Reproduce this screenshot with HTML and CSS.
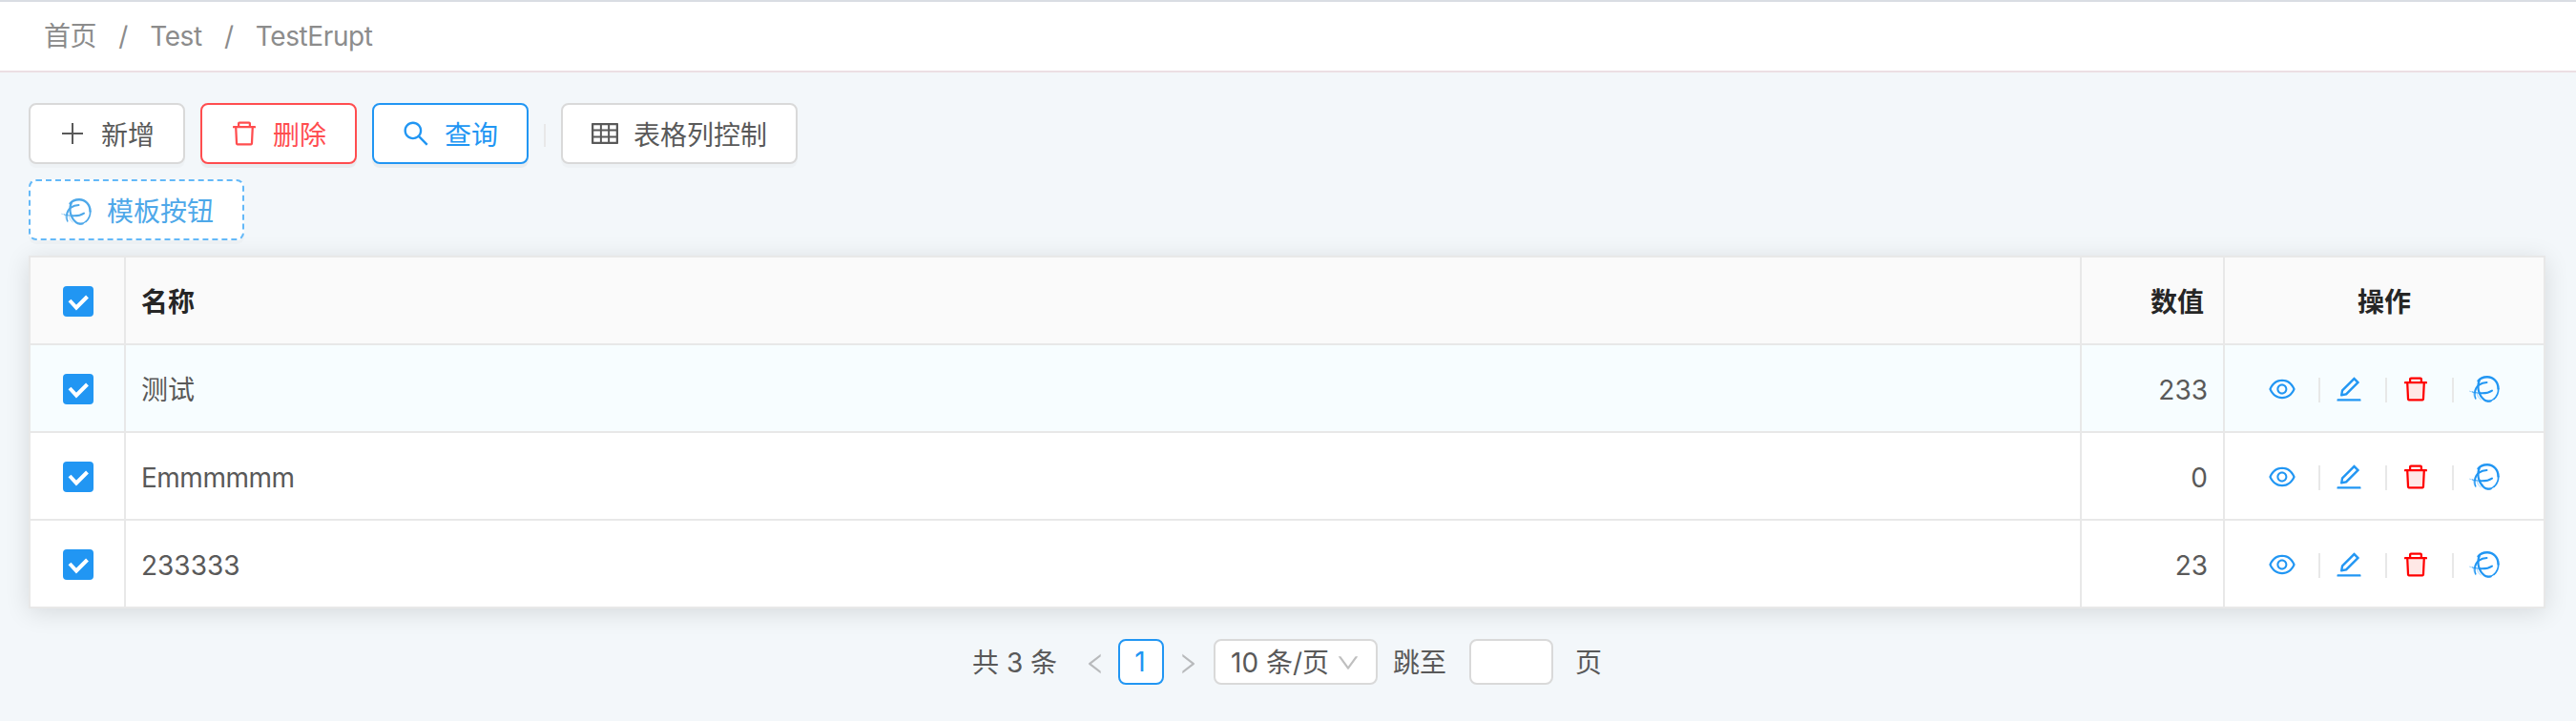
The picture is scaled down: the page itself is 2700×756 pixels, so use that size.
FILE: index.html
```html
<!DOCTYPE html>
<html lang="zh-CN">
<head>
<meta charset="utf-8">
<title>TestErupt</title>
<link rel="stylesheet" href="styles.css">
</head>
<body>
<svg class="sprite" aria-hidden="true">
  <symbol id="plus" viewBox="64 64 896 896"><path d="M480 160h64v704h-64z"/><path d="M160 480h704v64H160z"/></symbol>
  <symbol id="trash" viewBox="64 64 896 896"><path d="M360 184h-8c4.400 0 8-3.600 8-8v8h304v-8c0 4.400 3.600 8 8 8h-8v72h72v-80c0-35.300-28.700-64-64-64H352c-35.300 0-64 28.700-64 64v80h72v-72zm504 72H160c-17.700 0-32 14.300-32 32v32c0 4.400 3.600 8 8 8h60.400l24.700 523c1.600 34.100 29.800 61 63.900 61h454c34.200 0 62.300-26.800 63.900-61l24.700-523H888c4.400 0 8-3.600 8-8v-32c0-17.700-14.300-32-32-32zM731.300 840H292.700l-24.200-512h487l-24.200 512z"/></symbol>
  <symbol id="search" viewBox="64 64 896 896"><path d="M909.600 854.500L649.900 594.800C690.200 542.700 712 479 712 412c0-80.200-31.300-155.400-87.900-212.100-56.600-56.700-132-87.900-212.100-87.900s-155.500 31.300-212.100 87.900C143.200 256.500 112 331.800 112 412c0 80.100 31.300 155.500 87.900 212.100C256.500 680.800 331.800 712 412 712c67 0 130.600-21.800 182.700-62l259.700 259.600a8.200 8.200 0 0011.600 0l43.600-43.500a8.200 8.200 0 000-11.600zM570.400 570.400C528 612.700 471.800 636 412 636s-116-23.300-158.400-65.600C211.300 528 188 471.800 188 412s23.300-116.100 65.600-158.400C296 211.300 352.200 188 412 188s116.100 23.200 158.400 65.600S636 352.200 636 412s-23.300 116.100-65.600 158.400z"/></symbol>
  <symbol id="grid" viewBox="64 64 896 896"><path d="M928 160H96c-17.700 0-32 14.300-32 32v640c0 17.700 14.300 32 32 32h832c17.700 0 32-14.300 32-32V192c0-17.700-14.300-32-32-32zm-40 208H676V232h212v136zm0 224H676V432h212v160zM412 432h200v160H412V432zm200-64H412V232h200v136zm-476 64h212v160H136V432zm0-200h212v136H136V232zm0 424h212v136H136V656zm276 0h200v136H412V656zm476 136H676V656h212v136z"/></symbol>
  <symbol id="eye" viewBox="64 64 896 896"><path d="M942.200 486.200C847.400 286.500 704.100 186 512 186c-192.200 0-335.400 100.500-430.200 300.300a60.300 60.300 0 000 51.500C176.600 737.500 319.900 838 512 838c192.200 0 335.400-100.500 430.200-300.300 7.700-16.200 7.700-35 0-51.500zM512 766c-161.300 0-279.400-81.800-362.700-254C232.600 339.800 350.700 258 512 258c161.300 0 279.400 81.800 362.700 254C791.500 684.200 673.400 766 512 766zm-4-430c-97.200 0-176 78.800-176 176s78.800 176 176 176 176-78.800 176-176-78.800-176-176-176zm0 288c-61.900 0-112-50.100-112-112s50.100-112 112-112 112 50.100 112 112-50.100 112-112 112z"/></symbol>
  <symbol id="edit" viewBox="64 64 896 896"><path d="M257.700 752c2 0 4-.2 6-.5L431.900 722c2-.4 3.900-1.300 5.300-2.800l423.900-423.900a9.960 9.960 0 000-14.100L694.900 114.900c-1.900-1.900-4.400-2.900-7.100-2.900s-5.200 1-7.100 2.900L256.800 538.800c-1.500 1.500-2.400 3.300-2.800 5.300l-29.500 168.200a33.500 33.500 0 009.400 29.800c6.600 6.400 14.900 9.900 23.800 9.900zm67.400-174.400L687.800 215l73.300 73.300-362.700 362.600-88.900 15.700 15.600-89zM880 836H144c-17.700 0-32 14.300-32 32v36c0 4.400 3.600 8 8 8h784c4.400 0 8-3.600 8-8v-36c0-17.700-14.300-32-32-32z"/></symbol>
  <symbol id="left" viewBox="64 64 896 896"><path d="M724 218.300V141c0-6.700-7.700-10.400-12.900-6.300L260.300 486.800a31.860 31.860 0 000 50.300l450.800 352.100c5.300 4.100 12.900.4 12.900-6.300v-77.300c0-4.900-2.300-9.600-6.100-12.600l-360-281 360-281.100c3.800-3 6.100-7.700 6.100-12.600z"/></symbol>
  <symbol id="down" viewBox="64 64 896 896"><path d="M884 256h-75c-5.100 0-9.900 2.500-12.900 6.600L512 654.200 227.900 262.600c-3-4.100-7.800-6.600-12.900-6.600h-75c-6.500 0-10.300 7.400-6.500 12.700l352.600 486.100c12.800 17.600 39 17.600 51.700 0l352.600-486.100c3.900-5.300.1-12.700-6.400-12.700z"/></symbol>
  <symbol id="erupt" viewBox="0 0 32 28"><g fill="none" stroke="currentColor" stroke-linecap="round">
    <path stroke-width="2.400" d="M9.500 5.500C11.500 2.600 15 1.300 19 1.300c6.500 0 11.500 5.200 11.500 12.200"/>
    <path stroke-width="1.700" d="M30.700 13.500c0 4.500-1.700 8.300-4.700 10.800"/>
    <path stroke-width="1.200" d="M26 24.300c-1.800 1.700-4 2.500-6.500 2.600"/>
    <path stroke-width="2.200" d="M10.800 4.500C7.800 12 10 21 16 25.300c1.800 1.300 4 1.600 6.500 1.200"/>
    <path stroke-width="2" d="M18.500 6.900C12.500 7 6.800 10.500 6 17.500"/>
    <path stroke-width="1.500" d="M6 17.500c-.3 2.500-.1 4.500.8 6.300"/>
    <path stroke-width="2" d="M24 15.600c-3.300 2.200-8.300 3-13 2.600"/>
    <path stroke-width="1" d="M11 18.200C8 18 5.500 17.600 3.500 17"/>
    <path stroke-width=".8" opacity=".5" d="M3.500 17l-3-.8M4.500 18c.2 2.500 1 4.800 2.300 6.800M8.200 19c.7 2.500 2 4.500 4 6"/></g></symbol>
</svg>

<nav class="breadcrumb"><span>首页</span><i>/</i><span>Test</span><i>/</i><span>TestErupt</span></nav>

<main class="page">
  <div class="toolbar">
    <button class="btn"><svg class="icon"><use href="#plus"/></svg><span>新增</span></button>
    <button class="btn btn-danger"><svg class="icon"><use href="#trash"/></svg><span>删除</span></button>
    <button class="btn btn-primary"><svg class="icon"><use href="#search"/></svg><span>查询</span></button>
    <span class="bar"></span>
    <button class="btn btn-columns"><svg class="icon"><use href="#grid"/></svg><span>表格列控制</span></button>
  </div>
  <div class="toolbar">
    <button class="btn btn-dashed"><svg class="icon icon-erupt"><use href="#erupt"/></svg><span>模板按钮</span></button>
  </div>

  <section class="table">
    <div class="row head">
      <div class="cell check"><span class="box"><svg viewBox="0 0 32 32"><path d="M7 15l7 7.500L25.500 11"/></svg></span></div>
      <div class="cell name">名称</div><div class="cell number">数值</div><div class="cell title">操作</div>
    </div>
    <div class="row active">
      <div class="cell check"><span class="box"><svg viewBox="0 0 32 32"><path d="M7 15l7 7.500L25.500 11"/></svg></span></div>
      <div class="cell name">测试</div><div class="cell number">233</div>
      <div class="cell actions"><svg class="icon"><use href="#eye"/></svg><i></i><svg class="icon"><use href="#edit"/></svg><i></i><svg class="icon red"><path class="tint" d="M6.400 8.250h15.200l-.75 16H7.150z"/><use href="#trash"/></svg><i></i><svg class="icon icon-erupt"><use href="#erupt"/></svg></div>
    </div>
    <div class="row">
      <div class="cell check"><span class="box"><svg viewBox="0 0 32 32"><path d="M7 15l7 7.500L25.500 11"/></svg></span></div>
      <div class="cell name"><span class="latin">Emmmmmm</span></div><div class="cell number">0</div>
      <div class="cell actions"><svg class="icon"><use href="#eye"/></svg><i></i><svg class="icon"><use href="#edit"/></svg><i></i><svg class="icon red"><path class="tint" d="M6.400 8.250h15.200l-.75 16H7.150z"/><use href="#trash"/></svg><i></i><svg class="icon icon-erupt"><use href="#erupt"/></svg></div>
    </div>
    <div class="row">
      <div class="cell check"><span class="box"><svg viewBox="0 0 32 32"><path d="M7 15l7 7.500L25.500 11"/></svg></span></div>
      <div class="cell name">233333</div><div class="cell number">23</div>
      <div class="cell actions"><svg class="icon"><use href="#eye"/></svg><i></i><svg class="icon"><use href="#edit"/></svg><i></i><svg class="icon red"><path class="tint" d="M6.400 8.250h15.200l-.75 16H7.150z"/><use href="#trash"/></svg><i></i><svg class="icon icon-erupt"><use href="#erupt"/></svg></div>
    </div>
  </section>

  <div class="pager">
    <span class="total">共 3 条</span>
    <svg class="arrow"><use href="#left"/></svg>
    <span class="current">1</span>
    <svg class="arrow next"><use href="#left"/></svg>
    <span class="size">10 条/页<svg class="caret"><use href="#down"/></svg></span>
    <span class="jump">跳至</span>
    <input class="goto" type="text" aria-label="页码">
    <span class="unit">页</span>
  </div>
</main>
</body>
</html>
```
FILE: styles.css
```css
* { box-sizing: border-box; }
body {
  margin: 0;
  height: 756px;
  overflow: hidden;
  background: #f3f7fa;
  color: #595959;
  font: 28px/44px Inter, "Noto Sans CJK SC", sans-serif;
}
.sprite { display: none; }
svg { fill: currentColor; flex: none; }
i { font-style: normal; }

.breadcrumb {
  display: flex;
  height: 76px;
  padding: 14px 46px 0;
  background: #fff;
  border-top: 2px solid #d9dde3;
  border-bottom: 2px solid #ecdfe3;
  color: #8c8c8c;
  letter-spacing: -.4px;
}
.breadcrumb i { width: 56px; text-align: center; }

.page { padding: 32px 32px 0 30px; }
.toolbar { display: flex; align-items: center; gap: 16px; margin-bottom: 16px; }
.btn {
  display: flex;
  align-items: center;
  justify-content: center;
  gap: 16px;
  width: 164px;
  height: 64px;
  padding: 0;
  background: #fff;
  border: 2px solid #d9d9d9;
  border-radius: 8px;
  box-shadow: 0 4px 0 rgba(0, 0, 0, .02);
  color: #595959;
  font: inherit;
  white-space: nowrap;
}
.btn span { padding-top: 4px; }
.btn-danger { color: #ff4d4f; border-color: #ff4d4f; box-shadow: 0 4px 0 rgba(0, 0, 0, .045); }
.btn-primary { color: #2196f3; border-color: #2196f3; box-shadow: 0 4px 0 rgba(0, 0, 0, .045); }
.btn-columns { width: 248px; }
.btn-dashed { width: 226px; padding-left: 2px; color: #4ea8e9; border: 2px dashed #64b9f8; }
.btn-dashed .icon { margin-top: 4px; }
.bar { width: 2px; height: 24px; margin-top: 4px; background: #e8e8e8; }
.icon { width: 28px; height: 28px; }
.icon-erupt { width: 32px; }

.table {
  background: #fff;
  border: 2px solid #e8e8e8;
  border-bottom: 0;
  box-shadow: 0 4px 24px rgba(0, 0, 0, .12);
}
.row { display: grid; grid-template-columns: 100px 1fr 150px 334px; height: 92px; border-bottom: 2px solid #e8e8e8; }
.cell { display: flex; align-items: center; padding-top: 3px; border-right: 2px solid #e8e8e8; }
.cell:last-child { border-right: 0; }
.check { justify-content: center; padding-top: 2px; }
.name { padding-left: 16px; }
.latin { letter-spacing: -.5px; }
.number { justify-content: flex-end; padding-right: 16px; }
.head { background: #fafafa; color: #262626; font-weight: 700; }
.head .number { padding-right: 20px; }
.active { background: #f7fdff; }
.title { justify-content: center; }
.box { display: flex; width: 32px; height: 32px; margin-left: 2px; background: #2196f3; border-radius: 4px; }
.box path { fill: none; stroke: #fff; stroke-width: 4; }
.actions { padding: 2px 0 0 46px; color: #2196f3; }
.actions i { width: 2px; height: 26px; margin: 2px 16px 0 24px; background: #e8e8e8; }
.red { color: #f00; }
.tint { fill: #ffe8e6; }

.pager { display: flex; align-items: center; height: 48px; margin: 32px 0 0 989px; }
.total { width: 117px; padding-top: 1px; }
.arrow { width: 24px; height: 24px; margin: 4px 12px 0 0; color: #b8babc; }
.current {
  width: 48px;
  height: 48px;
  margin-right: 13px;
  padding-right: 2px;
  background: #fff;
  border: 2px solid #2196f3;
  border-radius: 8px;
  color: #2196f3;
  text-align: center;
}
.next { transform: scaleX(-1); margin-right: 15px; }
.size {
  display: flex;
  align-items: center;
  justify-content: space-between;
  width: 172px;
  height: 48px;
  padding: 1px 17px 0 16px;
  background: #fff;
  border: 2px solid #d9d9d9;
  border-radius: 8px;
  white-space: nowrap;
}
.caret { width: 24px; height: 24px; color: #bfbfbf; }
.jump { margin-left: 16px; width: 80px; padding-top: 2px; }
.goto { width: 88px; height: 48px; margin-right: 23px; background: #fff; border: 2px solid #d9d9d9; border-radius: 8px; }
.unit { padding-top: 2px; }
```
